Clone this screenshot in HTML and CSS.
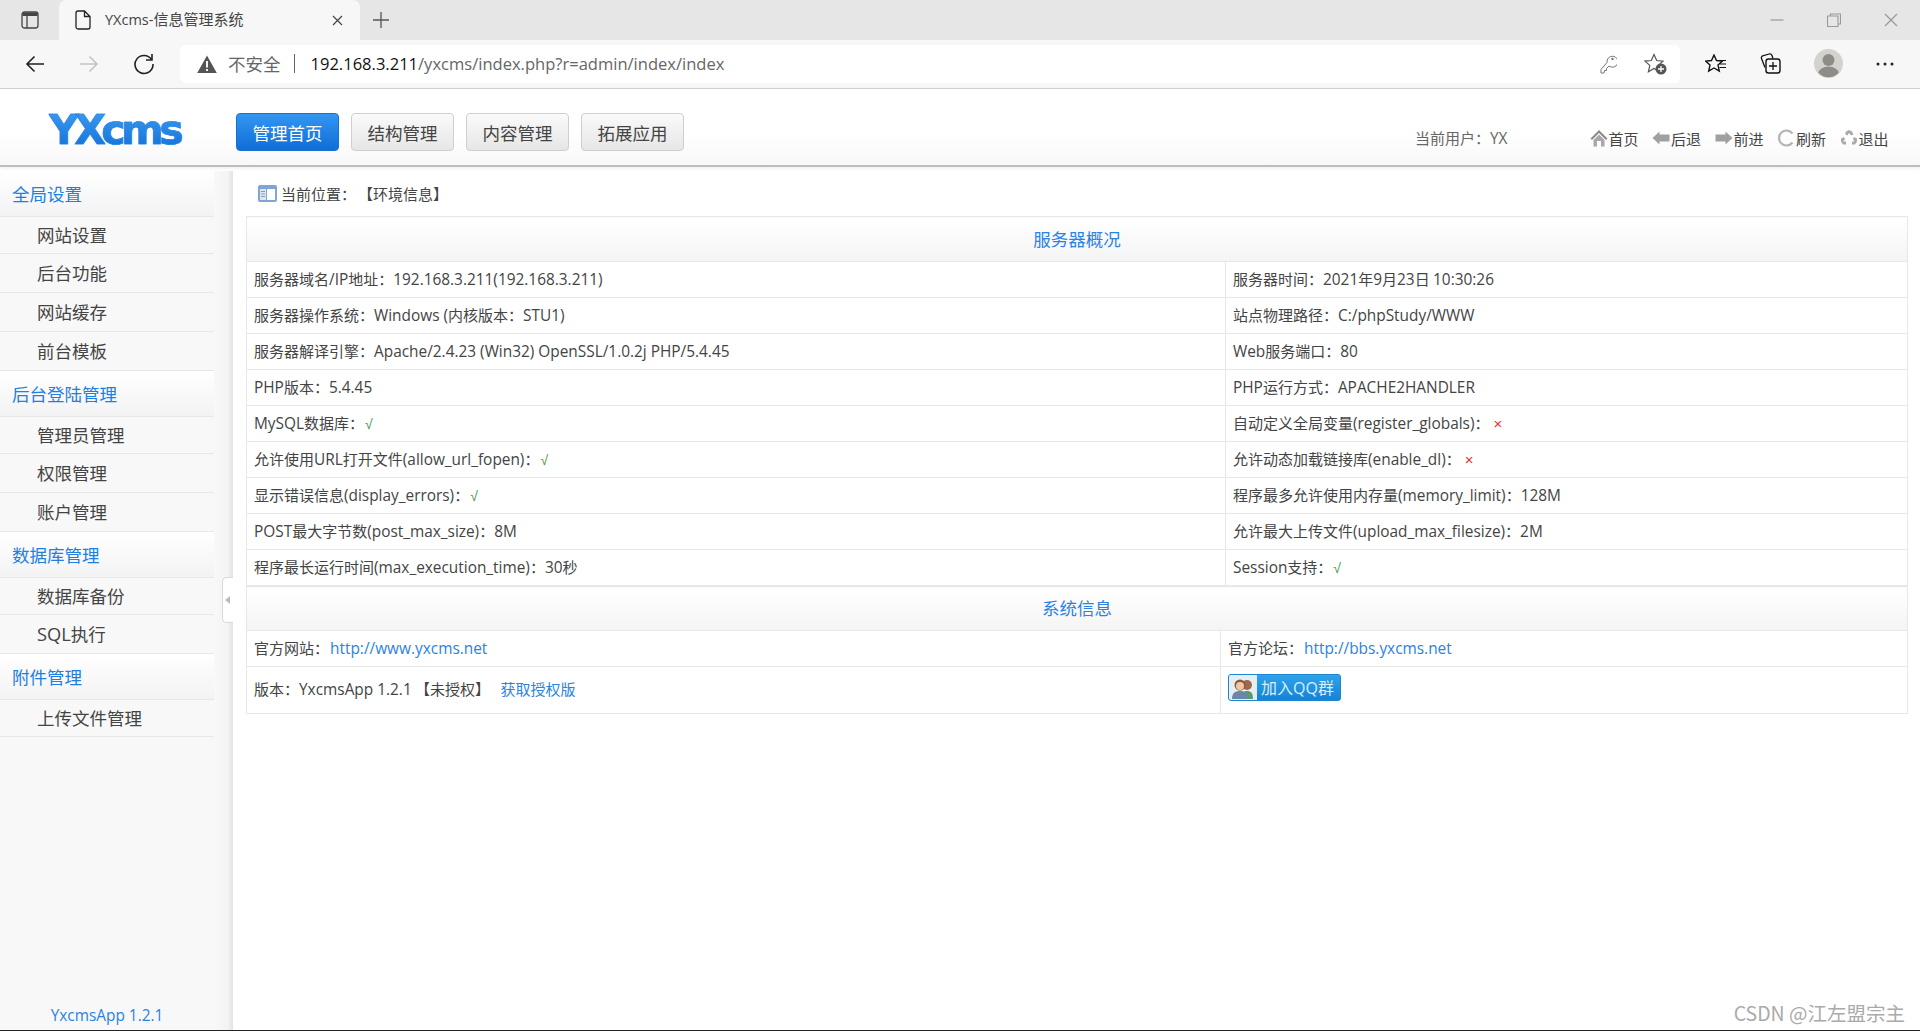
FILE: index.html
```html
<!DOCTYPE html>
<html lang="zh-CN">
<head>
  <meta charset="UTF-8">
  <title>YXcms-信息管理系统</title>
  <link rel="stylesheet" href="styles.css">
</head>
<body>
  <!-- browser chrome -->
  <div class="tabbar">
    <svg class="tabs-icon" width="18" height="18" viewBox="0 0 18 18"><rect x="1" y="1" width="16" height="16" rx="2.5" fill="none" stroke="#444" stroke-width="1.3"/><path d="M1.5 3.5a2 2 0 0 1 2-2h11a2 2 0 0 1 2 2V5h-15z" fill="#444"/><path d="M6 5v12" stroke="#444" stroke-width="1.3"/></svg>
    <div class="tab">
      <svg width="16" height="20" viewBox="0 0 16 20"><path d="M1 3a2 2 0 0 1 2-2h6.500L15 6.500V17a2 2 0 0 1-2 2H3a2 2 0 0 1-2-2z M9.500 1v5.500H15" fill="none" stroke="#222" stroke-width="1.300"/></svg>
      <span class="tab-title"><span class="en">YXcms-</span>信息管理系统</span>
      <svg class="tab-close" width="11" height="11" viewBox="0 0 11 11"><path d="M1 1l9 9M10 1l-9 9" stroke="#444" stroke-width="1.200"/></svg>
    </div>
    <svg class="tab-new" width="18" height="18" viewBox="0 0 18 18"><path d="M9 1v16M1 9h16" stroke="#555" stroke-width="1.300"/></svg>
    <div class="window-btns">
      <svg width="14" height="14" viewBox="0 0 14 14"><path d="M0.500 7h13" stroke="#999" stroke-width="1.200"/></svg>
      <svg width="14" height="14" viewBox="0 0 14 14"><path d="M3.500 3V1h10v10h-2.500M0.500 3h10.500v10.500H0.500z" fill="none" stroke="#999" stroke-width="1.100"/></svg>
      <svg width="14" height="14" viewBox="0 0 14 14"><path d="M1 1l12 12M13 1L1 13" stroke="#999" stroke-width="1.200"/></svg>
    </div>
  </div>

  <div class="toolbar">
    <div class="nav-btns">
      <svg width="20" height="18" viewBox="0 0 20 18"><path d="M19 9H2M9.500 1.500L2 9l7.500 7.500" fill="none" stroke="#222" stroke-width="1.600"/></svg>
      <svg width="20" height="18" viewBox="0 0 20 18"><path d="M1 9h17M10.500 1.500L18 9l-7.500 7.500" fill="none" stroke="#c4c4c4" stroke-width="1.600"/></svg>
      <svg width="22" height="22" viewBox="0 0 22 22"><path d="M18.500 6.500A9 9 0 1 0 20 11" fill="none" stroke="#222" stroke-width="1.600"/><path d="M19 1v6h-6" fill="none" stroke="#222" stroke-width="1.600"/></svg>
    </div>
    <div class="addressbar">
      <svg width="20" height="18" viewBox="0 0 20 18"><path d="M10 0.500L19.800 18H0.200z" fill="#555"/><path d="M9 6h2v6.500H9zM9 14h2v2H9z" fill="#f4f4f4"/></svg>
      <span class="not-secure">不安全</span>
      <span class="addr-sep"></span>
      <span class="url"><b>192.168.3.211</b>/yxcms/index.php?r=admin/index/index</span>
      <svg class="key" width="17" height="20" viewBox="0 0 17 20"><path d="M7 8.500L1 15.500V19h3l0.500-2.500h2V14.500l2.500-2.500a5.500 5.500 0 1 0-2-3.500z" fill="none" stroke="#777" stroke-width="1"/><circle cx="12.500" cy="5" r="1.200" fill="#777"/></svg>
      <svg class="star-add" width="23" height="22" viewBox="0 0 23 22"><path d="M10 1.500l2.700 6 6.300.6-4.800 4.300 1.400 6.400-5.600-3.300-5.600 3.300 1.400-6.400L0.900 8.100l6.400-.6z" fill="none" stroke="#555" stroke-width="1.200"/><circle cx="17" cy="16" r="5.500" fill="#555"/><path d="M17 13v6M14 16h6" stroke="#fff" stroke-width="1.300"/></svg>
    </div>
    <div class="browser-btns">
      <svg width="22" height="20" viewBox="0 0 22 20"><path d="M9 1l2.500 5.500 6 .6-4.500 4 1.300 6L9 14l-5.300 3.100 1.300-6-4.500-4 6-.6z" fill="none" stroke="#111" stroke-width="1.400"/><path d="M14 6.500h7M15 10h6M14.500 13.500h6.500" stroke="#111" stroke-width="1.200"/></svg>
      <svg width="21" height="21" viewBox="0 0 21 21"><path d="M5 14.500L1.500 5.500a2 2 0 0 1 1.200-2.600L9 1a2.500 2.500 0 0 1 3 1.500l1 3" fill="none" stroke="#111" stroke-width="1.300"/><rect x="6" y="6" width="14" height="14" rx="2.500" fill="#f7f7f7" stroke="#111" stroke-width="1.400"/><path d="M13 9v8M9 13h8" stroke="#111" stroke-width="1.300"/></svg>
      <svg width="29" height="29" viewBox="0 0 29 29"><circle cx="14.500" cy="14.500" r="14.500" fill="#d4d2ce"/><circle cx="14.500" cy="11" r="6" fill="#8f8c88"/><path d="M4.500 24a10 6.500 0 0 1 20 0a14 14 0 0 1-20 0z" fill="#8f8c88"/></svg>
      <svg width="18" height="4" viewBox="0 0 18 4"><circle cx="2" cy="2" r="1.500" fill="#222"/><circle cx="9" cy="2" r="1.500" fill="#222"/><circle cx="16" cy="2" r="1.500" fill="#222"/></svg>
    </div>
  </div>

  <!-- page header -->
  <div class="header">
    <div class="logo">YXcms</div>
    <div class="topnav">
      <a class="topnav-btn active">管理首页</a>
      <a class="topnav-btn">结构管理</a>
      <a class="topnav-btn">内容管理</a>
      <a class="topnav-btn">拓展应用</a>
    </div>
    <div class="current-user">当前用户：<span class="en">YX</span></div>
    <div class="tools">
      <a><svg width="18" height="18" viewBox="0 0 18 18"><path d="M9 1L0.500 9.500 2 11l7-7 7 7 1.500-1.500z" fill="#8a8a8a"/><path d="M3.500 11L9 5.500 14.500 11v6.500H11V12H7v5.500H3.500z" fill="#a8a8a8"/></svg>首页</a>
      <a><svg width="18" height="14" viewBox="0 0 18 14"><path d="M7.500 0.500L0.500 7l7 6.500V10.500h10v-7h-10z" fill="#a0a0a0"/></svg>后退</a>
      <a><svg width="18" height="14" viewBox="0 0 18 14"><path d="M10.500 0.500l7 6.500-7 6.500V10.500H0.500v-7h10z" fill="#a0a0a0"/></svg>前进</a>
      <a><svg width="18" height="18" viewBox="0 0 18 18"><path d="M15.500 4.500A7.500 7.500 0 1 0 15.500 13.500" fill="none" stroke="#b4b4b4" stroke-width="2.200"/></svg>刷新</a>
      <a><svg width="18" height="18" viewBox="0 0 18 18"><path d="M6 2.500L9 1l3 1.500 1.500 3-2.500 1L9 4 7.500 6.500 5 5zM14 8l3 1.500v3l-2 3h-3v-3h2.500L13 10zM4 8l1 2.500L3 12.500h3v3H3l-2-3v-3z" fill="#aaa"/></svg>退出</a>
    </div>
  </div>

  <div class="content">
    <!-- left menu -->
    <div class="sidebar">
      <div class="menu-head">全局设置</div>
      <a class="menu-item">网站设置</a>
      <a class="menu-item">后台功能</a>
      <a class="menu-item">网站缓存</a>
      <a class="menu-item">前台模板</a>
      <div class="menu-head">后台登陆管理</div>
      <a class="menu-item">管理员管理</a>
      <a class="menu-item">权限管理</a>
      <a class="menu-item">账户管理</a>
      <div class="menu-head">数据库管理</div>
      <a class="menu-item">数据库备份</a>
      <a class="menu-item"><span class="en">SQL</span>执行</a>
      <div class="menu-head">附件管理</div>
      <a class="menu-item">上传文件管理</a>
      <div class="version en">YxcmsApp 1.2.1</div>
      <div class="collapse-handle"></div>
    </div>

    <!-- main -->
    <div class="main">
      <div class="breadcrumb">
        <svg width="19" height="17" viewBox="0 0 19 17"><rect width="19" height="17" rx="2" fill="#7fa4d6"/><rect x="2" y="4" width="6" height="11" fill="#dfe6ef"/><rect x="9" y="4" width="8" height="11" fill="#fff"/><path d="M3 6.500h4M3 9h4M3 11.500h4" stroke="#8a9bb0"/></svg>
        <span>当前位置：</span><span class="crumb-now">【环境信息】</span>
      </div>

      <table class="info-table info-server">
        <colgroup><col class="col-left"><col></colgroup>
        <tr><th colspan="2">服务器概况</th></tr>
        <tr><td>服务器域名<span class="en">/IP</span>地址：<span class="en">192.168.3.211(192.168.3.211)</span></td><td>服务器时间：<span class="en">2021</span>年<span class="en">9</span>月<span class="en">23</span>日 <span class="en">10:30:26</span></td></tr>
        <tr><td>服务器操作系统：<span class="en">Windows (</span>内核版本：<span class="en">STU1)</span></td><td>站点物理路径：<span class="en">C:/phpStudy/WWW</span></td></tr>
        <tr><td>服务器解译引擎：<span class="en">Apache/2.4.23 (Win32) OpenSSL/1.0.2j PHP/5.4.45</span></td><td><span class="en">Web</span>服务端口：<span class="en">80</span></td></tr>
        <tr><td><span class="en">PHP</span>版本：<span class="en">5.4.45</span></td><td><span class="en">PHP</span>运行方式：<span class="en">APACHE2HANDLER</span></td></tr>
        <tr><td><span class="en">MySQL</span>数据库：<span class="yes">√</span></td><td>自动定义全局变量<span class="en">(register_globals)</span>：<span class="no">×</span></td></tr>
        <tr><td>允许使用<span class="en">URL</span>打开文件<span class="en">(allow_url_fopen)</span>：<span class="yes">√</span></td><td>允许动态加载链接库<span class="en">(enable_dl)</span>：<span class="no">×</span></td></tr>
        <tr><td>显示错误信息<span class="en">(display_errors)</span>：<span class="yes">√</span></td><td>程序最多允许使用内存量<span class="en">(memory_limit)</span>：<span class="en">128M</span></td></tr>
        <tr><td><span class="en">POST</span>最大字节数<span class="en">(post_max_size)</span>：<span class="en">8M</span></td><td>允许最大上传文件<span class="en">(upload_max_filesize)</span>：<span class="en">2M</span></td></tr>
        <tr><td>程序最长运行时间<span class="en">(max_execution_time)</span>：<span class="en">30</span>秒</td><td><span class="en">Session</span>支持：<span class="yes">√</span></td></tr>
      </table>

      <table class="info-table info-system">
        <colgroup><col class="col-left"><col></colgroup>
        <tr><th colspan="2">系统信息</th></tr>
        <tr><td>官方网站：<a class="link en">http://www.yxcms.net</a></td><td>官方论坛：<a class="link en">http://bbs.yxcms.net</a></td></tr>
        <tr class="row-tall"><td>版本：<span class="en">YxcmsApp 1.2.1</span> 【未授权】 <a class="link license">获取授权版</a></td><td>
          <a class="qq-btn">
            <span class="qq-face"><svg width="24" height="24" viewBox="0 0 24 24"><circle cx="16" cy="9" r="5" fill="#9a6a4a"/><path d="M10 23c0-6 2-8 6-8s6 2 6 8z" fill="#5c9a6c"/><circle cx="9" cy="9" r="5.500" fill="#8a5a3c"/><circle cx="9" cy="10" r="4" fill="#f0c8a8"/><path d="M1 23c0-6 3-8 8-8s8 2 8 8z" fill="#6a86a8"/></svg></span>
            <span class="qq-text">加入<span class="en">QQ</span>群</span>
          </a>
        </td></tr>
      </table>
    </div>
  </div>
  <div class="watermark">CSDN @江左盟宗主</div>
  <div class="bottom-line"></div>
</body>
</html>
```

FILE: styles.css
```css
* {
  box-sizing: border-box;
}

html, body {
  height: 100%;
}

body {
  margin: 0;
  display: flex;
  flex-direction: column;
  overflow: hidden;
  position: relative;
  font-family: "Noto Sans CJK SC", "Open Sans", sans-serif;
  font-size: 15px;
  color: #444;
  background: #fff;
}

.en {
  font-family: "Open Sans", "Noto Sans CJK SC", sans-serif;
  font-size: 15.400px;
}

/* browser chrome */
.tabbar {
  height: 40px;
  flex: none;
  display: flex;
  align-items: center;
  background: #e6e6e6;
  padding-left: 21px;
}

.tabs-icon {
  margin-right: 20px;
}

.tab {
  width: 301px;
  height: 40px;
  display: flex;
  align-items: center;
  padding-left: 16px;
  background: #f7f7f7;
  border-radius: 7px 7px 0 0;
}

.tab-title {
  margin-left: 14px;
  margin-top: -4px;
  color: #444;
  flex: 1;
}

.tab-title .en {
  font-size: 14.500px;
}

.tab-close {
  margin-right: 17px;
}

.tab-new {
  margin-left: 12px;
}

.window-btns {
  margin-left: auto;
  display: flex;
  gap: 43px;
  padding-right: 22px;
}

.toolbar {
  height: 49px;
  flex: none;
  display: flex;
  align-items: center;
  background: #f7f7f7;
  border-bottom: 1px solid #d2d2d2;
  padding-bottom: 1px;
}

.nav-btns {
  width: 180px;
  padding-left: 25px;
  display: flex;
  align-items: center;
  gap: 34px;
}

.addressbar {
  width: 1500px;
  height: 38px;
  display: flex;
  align-items: center;
  padding-left: 17px;
  background: #fff;
  border-radius: 6px;
}

.not-secure {
  margin-left: 11px;
  font-size: 17.500px;
  color: #666;
}

.addr-sep {
  width: 1px;
  height: 19px;
  margin: 0 16px 0 13px;
  background: #666;
}

.url {
  font-family: "Open Sans", sans-serif;
  font-size: 16.550px;
  color: #666;
}

.url b {
  font-weight: 400;
  color: #111;
}

.key {
  margin-left: auto;
}

.star-add {
  margin: 0 13px 0 27px;
}

.browser-btns {
  display: flex;
  align-items: center;
  padding-left: 25px;
}

.browser-btns svg:nth-child(2) {
  margin-left: 33px;
}

.browser-btns svg:nth-child(3) {
  margin-left: 33px;
}

.browser-btns svg:nth-child(4) {
  margin-left: 33px;
}

/* page header */
.header {
  height: 78px;
  flex: none;
  display: flex;
  align-items: center;
  padding: 0 32px 0 49px;
  background: linear-gradient(#fff 55%, #f8f8f8);
  border-bottom: 2px solid #bdbdbd;
  box-shadow: 0 1px 4px rgba(0, 0, 0, 0.08);
  position: relative;
  z-index: 1;
}

.logo {
  width: 187px;
  font-family: "DejaVu Sans", sans-serif;
  font-weight: 700;
  font-size: 41px;
  line-height: 44px;
  letter-spacing: -4.500px;
  margin-top: 5px;
  background: linear-gradient(#3f9df2, #0f6fd6);
  -webkit-background-clip: text;
  background-clip: text;
  color: transparent;
  -webkit-text-stroke: 0.600px #2585e6;
}

.topnav {
  display: flex;
  gap: 12px;
  margin-top: 10px;
}

.topnav-btn {
  width: 103px;
  height: 38px;
  display: flex;
  align-items: center;
  justify-content: center;
  font-size: 17.500px;
  color: #444;
  border: 1px solid #cfcfcf;
  border-radius: 4px;
  background: linear-gradient(#fafafa, #e6e6e6);
}

.topnav-btn.active {
  color: #fff;
  border-color: #1a70d0;
  background: linear-gradient(#3396f2, #0f6ed8);
}

.current-user {
  margin-left: auto;
  margin-right: 82px;
  margin-top: 22px;
  color: #666;
}

.current-user .en {
  color: #666;
}

.tools {
  display: flex;
  gap: 14px;
  margin-top: 22px;
}

.tools a {
  width: 48.500px;
  display: flex;
  align-items: center;
  gap: 1px;
  white-space: nowrap;
}

.tools svg {
  flex: none;
}

/* left menu */
.content {
  flex: 1;
  display: flex;
  min-height: 0;
  padding-top: 4px;
}

.sidebar {
  width: 233px;
  flex: none;
  display: flex;
  flex-direction: column;
  padding-right: 19px;
  position: relative;
  background: linear-gradient(90deg, #f8f8f8 215px, #f3f3f3 228px, #e2e2e2 233px);
}

.menu-head {
  height: 46px;
  flex: none;
  padding-left: 12px;
  display: flex;
  align-items: center;
  font-size: 17.500px;
  color: #2080e2;
  background: linear-gradient(#fff, #f3f3f3);
  border-bottom: 1px solid #e8e8e8;
}

.menu-item {
  height: 39px;
  flex: none;
  padding: 0 0 2px 37px;
  display: flex;
  align-items: center;
  font-size: 17.500px;
  color: #444;
  border-bottom: 1px solid #e8e8e8;
}

.menu-item .en {
  font-size: 18.300px;
}

.menu-head + .menu-item {
  height: 37px;
}

.version {
  margin-top: auto;
  height: 25px;
  text-align: center;
  color: #2a82e4;
}

.collapse-handle {
  position: absolute;
  left: 222px;
  top: 406px;
  width: 11px;
  height: 46px;
  background: #fff;
  border: 1px solid #d8d8d8;
  border-right: none;
  border-radius: 5px 0 0 5px;
}

.collapse-handle::after {
  content: "";
  position: absolute;
  left: 2px;
  top: 18px;
  border: 4.500px solid transparent;
  border-left: none;
  border-right: 5px solid #bbb;
}

/* main */
.main {
  flex: 1;
  min-width: 0;
  padding: 0 12px 0 13px;
}

.breadcrumb {
  height: 45px;
  display: flex;
  align-items: center;
  padding-left: 12px;
  gap: 4px;
}

.crumb-now {
  margin-left: -2px;
}

.info-table {
  width: 100%;
  table-layout: fixed;
  border-collapse: collapse;
}

.info-table th {
  height: 45px;
  padding: 0 0 2px;
  font-size: 17.500px;
  font-weight: 400;
  color: #2a82e4;
  background: linear-gradient(#fff, #f4f4f4);
  border: 1px solid #e8e8e8;
}

.info-table td {
  height: 36px;
  padding: 0 7px 2px;
  border: 1px solid #e8e8e8;
  white-space: nowrap;
}

.info-server .col-left {
  width: 979px;
}

.info-system th {
  height: 44px;
}

.info-system .col-left {
  width: 974px;
}

.info-table .row-tall td {
  height: 47px;
}

.yes {
  font-family: "Liberation Sans", sans-serif;
  font-size: 14px;
  color: #3a9a3a;
  margin-left: 1px;
}

.no {
  font-family: "Liberation Sans", sans-serif;
  font-size: 15px;
  color: #e83030;
  margin-left: 4px;
}

.link {
  color: #2a82e4;
  margin-left: 1px;
}

.license {
  margin-left: 7px;
}

.qq-btn {
  width: 113px;
  height: 27px;
  display: flex;
  margin: -3px 0 0 0;
  border: 1px solid #1d86d4;
  border-radius: 3px;
  overflow: hidden;
  background: linear-gradient(#2fa2ea, #1583d6);
}

.qq-face {
  width: 28px;
  flex: none;
  display: flex;
  align-items: center;
  justify-content: center;
  background: #e6eef4;
}

.qq-text {
  padding-left: 4px;
  font-size: 16px;
  line-height: 24px;
  color: #d8eefc;
}

.qq-text .en {
  font-size: 16px;
  color: #d8eefc;
}

.watermark {
  position: absolute;
  right: 15px;
  bottom: 4px;
  font-size: 19.500px;
  color: #aaa;
}

.bottom-line {
  height: 1px;
  flex: none;
  background: #222;
}
```
